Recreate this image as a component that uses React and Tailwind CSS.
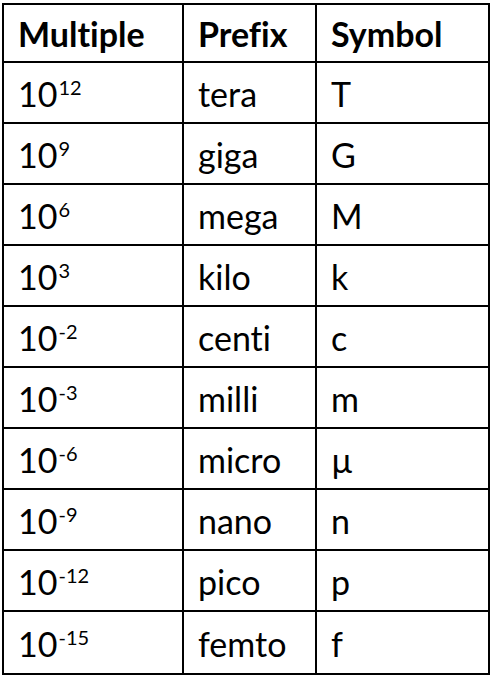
import React from "react";

const rows = [
  ["12", "tera", "T"],
  ["9", "giga", "G"],
  ["6", "mega", "M"],
  ["3", "kilo", "k"],
  ["-2", "centi", "c"],
  ["-3", "milli", "m"],
  ["-6", "micro", "µ"],
  ["-9", "nano", "n"],
  ["-12", "pico", "p"],
  ["-15", "femto", "f"],
];

export default function App() {
  return (
    <div
      className="w-[493px] h-[688px] bg-white pt-[3px] pl-[2px] [font-variant-ligatures:none]"
      style={{ fontFamily: "Lato, 'Open Sans', sans-serif" }}
    >
      <div className="w-[488px] border-2 border-black text-black">
        <div className="grid grid-cols-[178px_2px_131px_2px_171px] h-[58px] border-b-2 border-black">
          <div className="flex items-center pl-[14px] pt-[2px] text-[34px] font-bold">
            <span className="leading-none">Multiple</span>
          </div>
          <div className="bg-black" />
          <div className="flex items-center pl-[14px] pt-[2px] text-[34px] font-bold">
            <span className="leading-none">Prefix</span>
          </div>
          <div className="bg-black" />
          <div className="flex items-center pl-[14px] pt-[2px] text-[34px] font-bold">
            <span className="leading-none">Symbol</span>
          </div>
        </div>
        {rows.map(([exp, prefix, sym], i) => (
          <div
            key={prefix}
            className={
              "grid grid-cols-[178px_2px_131px_2px_171px] h-[61px] " +
              (i < rows.length - 1 ? "border-b-2 border-black" : "")
            }
          >
            <div className="flex items-center pl-[14px] pt-[2px] text-[34px]">
              <span className="leading-none">
                10
                <span className="text-[20px] relative -top-[12px] ml-[1px]">{exp}</span>
              </span>
            </div>
            <div className="bg-black" />
            <div className="flex items-center pl-[14px] pt-[2px] text-[34px]">
              <span className="leading-none">{prefix}</span>
            </div>
            <div className="bg-black" />
            <div className="flex items-center pl-[14px] pt-[2px] text-[34px]">
              <span className="leading-none">{sym}</span>
            </div>
          </div>
        ))}
      </div>
    </div>
  );
}
